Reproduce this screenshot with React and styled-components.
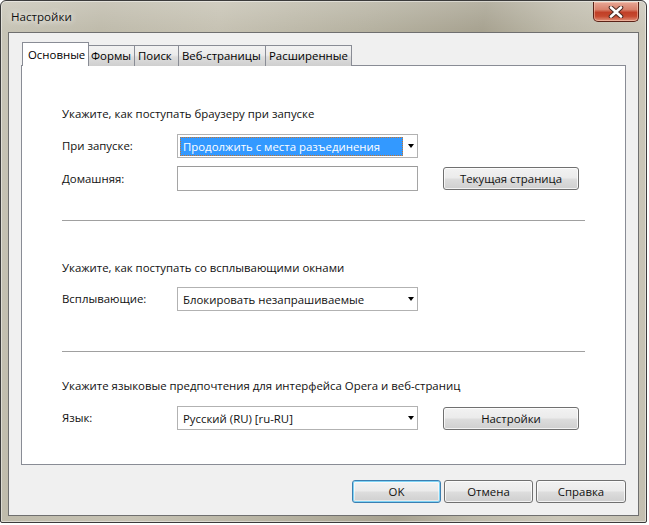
import React from 'react';
import styled, { createGlobalStyle, css } from 'styled-components';

const GlobalStyle = createGlobalStyle`
  html, body {
    margin: 0;
    padding: 0;
    background: #ffffff;
  }
  body {
    font-family: 'Open Sans', 'Noto Sans', sans-serif;
    font-size: 11.4px;
    color: #000;
  }
`;

const Window = styled.div`
  box-sizing: border-box;
  width: 647px;
  height: 523px;
  display: flex;
  flex-direction: column;
  padding: 0 7px 6px;
  border: 1px solid #3b3b3b;
  border-radius: 6px 6px 2px 2px;
  background:
    linear-gradient(180deg, rgba(255, 255, 255, 0.18) 0, rgba(255, 255, 255, 0) 30px),
    linear-gradient(100deg, #c8c5b7 0%, #bfbbab 14%, #c6c2b3 30%, #b6b2a1 50%, #a7a290 66%, #bdb9a9 76%, #cbc7b9 88%, #c3bfb0 100%);
  box-shadow: inset 0 0 0 1px rgba(255, 255, 255, 0.45);
`;

const TitleBar = styled.div`
  height: 31px;
  display: flex;
  align-items: flex-start;
  justify-content: space-between;
`;

const Title = styled.div`
  padding: 8px 0 0 3px;
  font-size: 11.6px;
  line-height: 16px;
  color: #111;
  text-shadow: 0 0 6px rgba(255, 255, 255, 0.9), 0 0 10px rgba(255, 255, 255, 0.6);
`;

const CloseButton = styled.div`
  box-sizing: border-box;
  width: 46px;
  height: 20px;
  margin-top: 1px;
  display: flex;
  align-items: center;
  justify-content: center;
  border: 1px solid #5a2217;
  border-top: none;
  border-radius: 0 0 5px 5px;
  background: linear-gradient(180deg, #e7a796 0%, #d8816b 40%, #c13f27 55%, #c6492f 75%, #e0917a 100%);
  box-shadow: inset 0 0 0 1px rgba(255, 220, 200, 0.45);
`;

const Client = styled.div`
  flex: 1;
  display: flex;
  flex-direction: column;
  border: 1px solid #6f6f6f;
  background: #f0f0f0;
  padding: 10px 12px 0 12px;
`;

const Tabs = styled.div`
  display: flex;
  align-items: flex-end;
  height: 23px;
  margin-bottom: -1px;
  position: relative;
  z-index: 1;
`;

const Tab = styled.div`
  box-sizing: border-box;
  width: ${({ $w }) => $w}px;
  height: 21px;
  padding-left: ${({ $pl }) => $pl || 3}px;
  font-size: 11.4px;
  line-height: 19px;
  white-space: nowrap;
  border: 1px solid #898c95;
  border-bottom: none;
  margin-left: -1px;
  background: linear-gradient(180deg, #f2f2f2 0%, #ebebeb 45%, #dddddd 55%, #cfcfcf 100%);
  ${({ $active }) =>
    $active &&
    css`
      height: 24px;
      line-height: 23px;
      margin-left: 1px;
      margin-right: -1px;
      background: #ffffff;
      position: relative;
      z-index: 2;
    `}
`;

const Panel = styled.div`
  box-sizing: border-box;
  height: 400px;
  border: 1px solid #898c95;
  background: #ffffff;
  padding: 40px 40px 0 40px;
`;

const Heading = styled.div`
  line-height: 16px;
  color: #111;
  margin-bottom: ${({ $mb }) => $mb}px;
`;

const Row = styled.div`
  display: grid;
  grid-template-columns: 115px 241px auto;
  align-items: center;
  margin-bottom: ${({ $mb }) => $mb || 0}px;
`;

const Label = styled.div`
  line-height: 16px;
  color: #111;
`;

const Select = styled.div`
  box-sizing: border-box;
  height: 24px;
  display: flex;
  align-items: center;
  padding: 2px 3px 2px 2px;
  border: 1px solid #b2b2b2;
  background: #ffffff;
`;

const SelectValue = styled.div`
  flex: 1;
  box-sizing: border-box;
  height: 19px;
  padding-left: 2px;
  line-height: 17px;
  white-space: nowrap;
  overflow: hidden;
  color: #111;
  border: 1px solid transparent;
  ${({ $selected }) =>
    $selected &&
    css`
      background: #3399ff;
      color: #ffffff;
      border: 1px dotted #c9742b;
    `}
`;

const Arrow = styled.div`
  width: 0;
  height: 0;
  margin-left: 5px;
  border-left: 3.5px solid transparent;
  border-right: 3.5px solid transparent;
  border-top: 4px solid #000;
`;

const TextInput = styled.div`
  box-sizing: border-box;
  height: 25px;
  border: 1px solid #a5a5a5;
  border-top-color: #9a9a9a;
  background: #ffffff;
`;

const Button = styled.div`
  box-sizing: border-box;
  width: ${({ $w }) => $w}px;
  height: 23px;
  margin-left: ${({ $ml }) => $ml || 0}px;
  display: flex;
  align-items: center;
  justify-content: center;
  color: #111;
  border: 1px solid #707070;
  border-radius: 3px;
  background: linear-gradient(180deg, #f2f2f2 0%, #ebebeb 48%, #dddddd 52%, #cfcfcf 100%);
  box-shadow: inset 0 0 0 1px rgba(255, 255, 255, 0.75);
  ${({ $default }) =>
    $default &&
    css`
      border-color: #3c7fb1;
      box-shadow: inset 0 0 0 1px #7fd3f5, inset 0 0 0 2px rgba(255, 255, 255, 0.5);
    `}
`;

const Separator = styled.div`
  height: 1px;
  background: #a0a0a0;
  margin: ${({ $top }) => $top}px 0 ${({ $bottom }) => $bottom}px;
`;

const Footer = styled.div`
  display: flex;
  justify-content: flex-end;
  gap: 3px;
  margin-top: 15px;
`;

const tabs = [
  { label: 'Основные', w: 67, pl: 5, active: true },
  { label: 'Формы', w: 48 },
  { label: 'Поиск', w: 45 },
  { label: 'Веб-страницы', w: 88 },
  { label: 'Расширенные', w: 87 },
];

const CloseIcon = () => (
  <svg width="16" height="12" viewBox="0 0 16 12">
    <path d="M3 1.5 L13 10.5 M13 1.5 L3 10.5" stroke="#4b2a22" strokeWidth="4.6" strokeLinecap="round" />
    <path d="M3 1.5 L13 10.5 M13 1.5 L3 10.5" stroke="#ffffff" strokeWidth="2.6" strokeLinecap="round" />
  </svg>
);

const App = () => (
  <>
    <GlobalStyle />
    <Window>
      <TitleBar>
        <Title>Настройки</Title>
        <CloseButton>
          <CloseIcon />
        </CloseButton>
      </TitleBar>
      <Client>
        <Tabs>
          {tabs.map((t) => (
            <Tab key={t.label} $w={t.w} $pl={t.pl} $active={t.active}>
              {t.label}
            </Tab>
          ))}
        </Tabs>
        <Panel>
          <Heading $mb={12}>Укажите, как поступать браузеру при запуске</Heading>
          <Row $mb={8}>
            <Label>При запуске:</Label>
            <Select>
              <SelectValue $selected>Продолжить с места разъединения</SelectValue>
              <Arrow />
            </Select>
          </Row>
          <Row>
            <Label>Домашняя:</Label>
            <TextInput />
            <Button $w={136} $ml={25}>Текущая страница</Button>
          </Row>
          <Separator $top={29} $bottom={39} />
          <Heading $mb={11}>Укажите, как поступать со всплывающими окнами</Heading>
          <Row>
            <Label>Всплывающие:</Label>
            <Select>
              <SelectValue>Блокировать незапрашиваемые</SelectValue>
              <Arrow />
            </Select>
          </Row>
          <Separator $top={40} $bottom={26} />
          <Heading $mb={12}>Укажите языковые предпочтения для интерфейса Opera и веб-страниц</Heading>
          <Row>
            <Label>Язык:</Label>
            <Select>
              <SelectValue>Русский (RU) [ru-RU]</SelectValue>
              <Arrow />
            </Select>
            <Button $w={136} $ml={25}>Настройки</Button>
          </Row>
        </Panel>
        <Footer>
          <Button $w={89} $default>OK</Button>
          <Button $w={89}>Отмена</Button>
          <Button $w={90}>Справка</Button>
        </Footer>
      </Client>
    </Window>
  </>
);

export default App;
